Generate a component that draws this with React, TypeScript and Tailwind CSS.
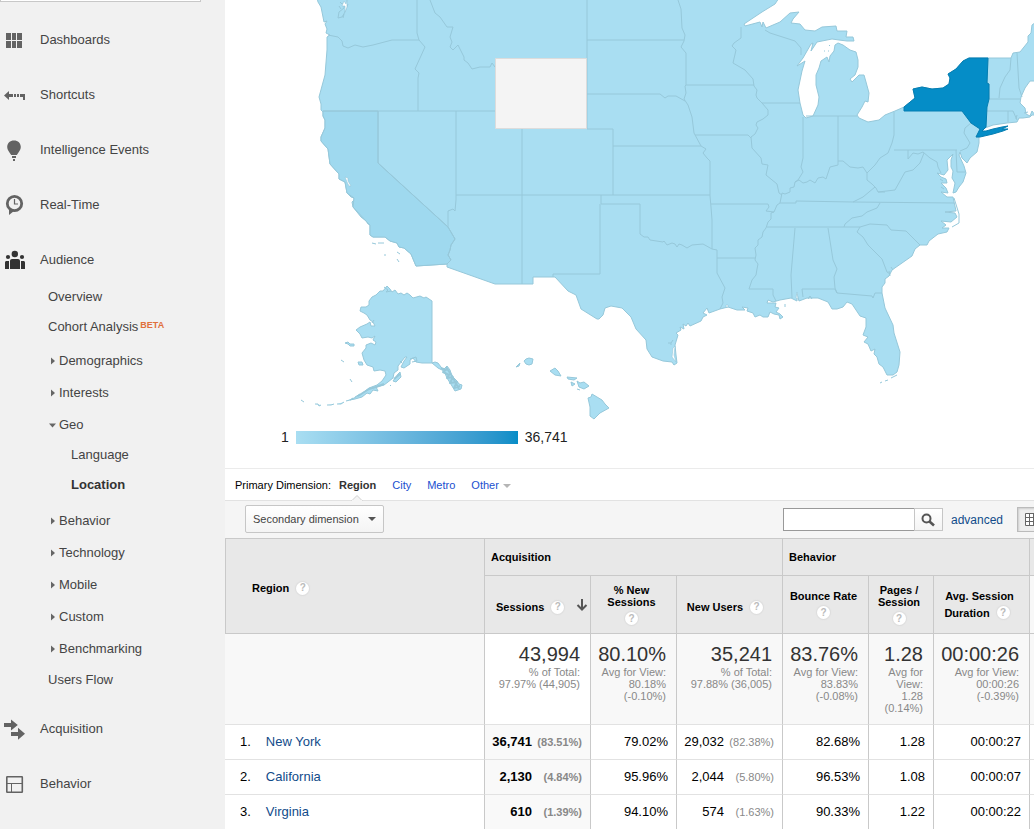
import { useState } from 'react'
import type { ReactNode } from 'react'

type IconName = 'dashboards' | 'shortcuts' | 'bulb' | 'realtime' | 'audience' | 'acquisition' | 'behavior'

const ICONS: Record<IconName, ReactNode> = {
  dashboards: <path d="M6 8h5v7H6zM12 8h4v7h-4zM17 8h5v7h-5zM6 16h5v7H6zM12 16h4v7h-4zM17 16h5v7h-5z" />,
  shortcuts: <path d="M4 15.500L9 11v3h4v3H9v3zM14 14h2v3h-2zM17 14h2v3h-2zM20 14h5v6h-2v-3h-3z" />,
  bulb: <path d="M14 5.500c4 0 6.800 2.700 6.800 6.500 0 3-1.800 4.500-4 8h-5.600c-2.200-3.500-4-5-4-8 0-3.800 2.800-6.500 6.800-6.500zM12 21h4v2h-4zM13 24h2v2h-2z" />,
  realtime: (
    <>
      <circle cx="14.500" cy="13.500" r="7.200" fill="none" stroke="currentColor" strokeWidth="2.800" />
      <path d="M9 18v7l5-4z" />
      <path d="M14.500 9v5H18" fill="none" stroke="currentColor" strokeWidth="1.200" />
    </>
  ),
  audience: (
    <>
      <circle cx="14.800" cy="9" r="3.200" />
      <circle cx="8" cy="12" r="2.100" />
      <circle cx="22" cy="12" r="2.100" />
      <path d="M10 24v-8c0-1.200.8-2 2-2h6c1.200 0 2 .8 2 2v8zM5 24v-6.500c0-.9.600-1.500 1.500-1.500H9v8zM25 24v-6.500c0-.9-.6-1.500-1.500-1.500H21v8z" />
    </>
  ),
  acquisition: <path d="M4 9h7V5.500l6.800 5.500-6.800 5.500V13H4zM11 18h7v-4.200l7 6-7 6V22h-7z" />,
  behavior: (
    <g fill="none" stroke="currentColor">
      <rect x="6.800" y="7.800" width="15.500" height="15.500" rx="0.500" strokeWidth="1.600" />
      <path d="M7 14.500h15M11.500 14.500V23" strokeWidth="1" />
    </g>
  ),
}

const LAND =
  'M317 -2L318 2 321 7 324 22 327 21 325 24 327 29 326 33 330 35 327 37 327 50 325 75 322 86 319 97 321 104 321 110 323 112 323 116 325 120 325 128 321 137 321 141 328 149 330 164 339 174 339 179 345 182 347 193 351 197 354 198 354 200 352 202 353 207 361 217 366 221 368 224 370 225 370 235 373 237 385 237 390 241 397 243 399 247 404 248 411 254 416 266 447 264 447 267 495 284 533 284 533 277 555 277 568 291 576 295 581 309 597 319 599 319 603 315 605 308 611 306 622 308 631 317 636 329 646 340 647 349 652 357 663 361 672 362 674 365 677 363 676 355 675 345 678 335 676 333 681 330 680 327 684 329 683 324 686 326 688 323 690 326 701 321 703 317 707 315 703 313 707 308 709 313 720 309 728 307 737 310 745 310 742 307 748 308 747 311 753 313 755 317 760 315 763 317 768 317 770 312 774 314 779 315 780 319 783 317 780 314 776 312 779 308 775 307 776 303 767 303 768 300 773 302 780 300 791 298 797 301 797 294 799 301 807 298 818 298 828 302 832 309 837 309 843 307 847 302 852 304 860 316 866 318 866 327 863 335 868 337 864 342 868 344 871 351 875 349 874 354 877 357 879 364 883 367 887 375 893 375 897 372 899 365 900 352 894 333 893 325 885 308 882 293 882 287 885 283 885 279 889 276 892 270 902 263 912 256 915 249 920 245 927 245 929 241 938 234 947 232 949 228 942 228 946 225 941 221 951 222 957 217 955 213 945 212 956 211 953 197 947 197 941 192 948 193 946 188 941 183 947 183 946 179 941 177 937 173 944 175 948 170 947 160 953 154 951 160 951 167 953 171 952 178 955 183 953 193 956 192 959 187 963 182 966 173 964 166 959 155 960 152 962 158 967 163 970 158 977 152 979 143 979 137 976 137 980 130 985 128 993 125 1007 123 1017 122 1019 118 1023 118 1030 117 1032 115 1035 115 1032 111 1030 116 1026 114 1025 108 1020 103 1021 97 1025 88 1030 81 1036 81 1036 22 1032 25 1031 33 1028 36 1028 42 1020 52 1013 53 1011 58 969 58 963 61 956 69 948 74 950 78 949 84 943 88 932 89 922 87 913 89 915 98 904 107 895 111 885 115 879 120 868 122 859 118 857 115 862 107 865 101 868 102 869 93 866 82 864 75 859 75 852 82 850 79 855 75 858 67 858 60 856 52 850 50 843 45 838 43 835 45 834 51 830 56 829 62 827 57 821 61 819 68 816 75 816 85 819 97 818 105 813 116 806 118 803 115 800 103 798 90 802 71 805 61 797 66 803 58 811 44 813 43 811 51 817 42 832 39 839 40 847 41 854 41 853 37 846 37 847 31 837 31 836 26 822 27 815 31 805 30 800 24 791 23 793 19 799 12 790 13 780 22 766 28 763 22 762 27 760 22 745 26 744 24 762 12 775 4 779 -2z'

const NEW_YORK =
  'M904 107L915 98 913 89 922 87 932 89 943 88 949 84 950 78 948 74 956 69 963 61 969 58 988 58 987 83 989 84 989 99 987 107 986 127 982 131 986 131 993 129 1002 127 1008 126 1002 129 1008 129 1003 131 993 134 980 137 976 137 980 129 971 123 965 115 962 111 904 111z'

const CALIFORNIA =
  'M323 111L378 111 378 163 448 227 455 239 451 245 450 250 448 255 451 260 447 264 416 266 411 254 404 248 399 247 397 243 390 241 385 237 373 237 370 235 370 225 366 221 353 207 354 198 347 193 345 182 339 179 339 174 330 164 328 149 321 141 321 137 325 128 325 120 323 116z'

const BORDERS = [
  'M328 35L338 37 342 41 343 46 348 48 355 45 363 47 373 45 392 40 419 40',
  'M417 0L417 33 419 40 425 47 415 69 419 73 418 78 418 111',
  'M430 0L435 13 440 17 447 27 453 27 450 37 452 42 450 47 453 50 458 45 464 57 464 60 468 63 472 69 480 67 490 67 492 63 495 67',
  'M323 111H495M378 111V163L448 227 455 239 451 245 450 250 448 255 451 260 447 264',
  'M448 227L448 211 453 209 455 211 456 200 456 111M456 195H710M522 129V284',
  'M587 0V58M587 40H684M587 94H660L665 98 668 96 676 96 685 101',
  'M678 0L681 9 682 28 685 35 684 41 681 47 686 53 686 85 685 86 686 93 684 99 688 105 692 117 694 133 701 146 706 149 703 153 707 158 710 161 710 196 711 207 712 220 712 249',
  'M686 85H754M587 129H613V195M613 146H701M695 135H748L751 138M587 58V129',
  'M741 27L741 38 734 43 732 46 736 50 733 63 745 70 753 79 754 86 757 90 756 95 757 98 762 103 768 110 768 115 763 119 757 122 756 125 758 128 755 134 751 137 752 148 761 158 762 164 768 165 766 175 777 184 779 193 782 195',
  'M765 30L770 33 795 41 801 48 801 55M762 103H800M803 117V158L801 167 803 172 798 180 795 182',
  'M777 205L780 203 782 193 785 194 790 192 790 188 794 187 795 182 799 180 803 183 807 182 810 180 815 183 818 178 823 177 826 179 830 167 838 165 838 161 843 161 850 167 858 168 863 167 867 173 875 165 880 158 888 153 892 143 894 135 894 112',
  'M777 205L774 212 771 213 771 219 768 222 766 228 763 232 762 237 758 240 758 245 755 248 756 255 755 260 758 264 757 269 756 275 752 280 749 289 773 289 773 295 776 301',
  'M838 116V161M806 116H857M867 173L867 180 872 184 876 188 878 192 895 190 905 172 913 170 920 163 924 153',
  'M878 192L885 192M894 150H957M908 150V159L913 153 918 154 923 152 930 158 937 162 938 167 941 173',
  'M956 150L957 172 965 172M971 123L965 128 964 133 970 143 967 148 960 151',
  'M1011 58L1010 70 1005 77 1000 88 999 98M989 99H1020M1017 53L1019 88 1022 97M987 111H1013L1017 120M1008 111V122M988 58L987 83 989 84V99',
  'M780 203H796V201L853 202 954 203M853 202L863 197 875 187 872 184M880 203L877 208 867 212 862 216 852 218 845 224 844 227',
  'M767 227H860L870 224 887 225 891 230 906 231 920 245M860 227L857 232 863 237 868 245 882 259 887 272 890 274',
  'M795 228L791 275 792 298M828 228L833 260 837 269 834 277 835 288 837 293',
  'M803 297L802 289H835L837 293 872 296 873 298 875 293 882 293',
  'M711 204H768L769 207 766 211 774 212M717 258H755',
  'M601 195V204H640V234L644 237 648 237 650 240 663 242 664 241 667 245 672 243 675 244 677 247 679 244 682 245 687 248 692 245 703 244 712 249 717 250 717 273 725 288 722 297 723 303 720 309',
  'M600 204V274H553V277',
]

// Alaska, the Aleutians and Hawaii
const OUTLYING = [
  'M432 301L426 297 424 298 420 296 413 298 410 295 407 293 404 295 401 293 398 294 395 290 392 292 390 289 387 286 383 291 380 291 376 295 372 297 369 301 369 305 366 307 361 307 360 311 364 313 367 315 370 320 373 322 375 326 371 326 370 322 367 324 360 327 356 330 360 334 362 338 368 337 372 338 375 336 373 340 376 342 375 345 371 343 366 345 366 348 362 353 364 360 367 365 373 367 374 371 380 370 385 371 386 375 382 381 377 385 369 388 360 395 350 400 355 399 362 397 367 393 370 394 373 390 378 391 376 387 384 385 388 382 393 378 394 373 398 370 398 366 405 357 407 357 404 361 401 367 404 368 410 364 410 360 413 358 416 362 422 363 432 363z',
  'M432 363L435 362 438 363 441 367 443 370 447 366 450 370 452 376 457 381 459 384 462 385 461 389 455 391 452 386 447 378 444 371 438 368z',
  'M398 374L400 372 401 377 396 382 393 381z',
  'M345 343L348 342 350 344 354 344 354 346 350 346 348 344zM358 362L362 362 363 365 359 365zM341 360L344 362M350 379L352 382',
  'M301 400L304 402M315 404H318L319 406 321 405M327 405L331 405 334 404M337 404L341 404 344 402M346 401L350 400 353 398M355 397L360 394M390 385L391 386',
  'M524 361L526 359 529 358 533 359 532 364 529 365 526 364zM516 367L520 363 519 366z',
  'M550 371L555 368 558 371 561 376 555 375zM567 377L577 378 574 380 568 379zM571 382L575 384 572 386zM577 381L580 383 584 382 589 386 584 389 579 387zM577 389L580 390',
  'M588 398L591 397 592 394 602 400 605 404 609 408 600 413 594 419 590 416 590 407z',
]

const SPECKS = [
  'M372 243L376 244M378 243L384 243M397 252L400 254M397 259L399 262M384 255H386',
  'M954 198L959 214 959 223 952 227M785 304V307M880 383L882 382M885 381L888 380M891 378L897 375',
  'M668 343L671 343 673 340M670 344H672M808 299L810 296 812 299M890 276L889 271M893 270L891 267',
  'M340 2L342 4 344 3 344 8 339 12 338 18 342 17 345 12 348 4M341 9L339 6M343 18L344 14',
  'M384 287L388 290 386 292 391 291M372 323L374 320M410 359L416 357 417 361 412 362M400 361L402 363',
  'M824 51H825M829 46L830 45M828 51H829M941 187L944 189M940 179L943 181M1024 113L1028 112M1016 119L1017 115',
]

function UsMap() {
  return (
    <svg viewBox="225 0 809 424" preserveAspectRatio="xMinYMin slice" className="block h-[424px] w-full" role="img" aria-label="Sessions by region">
      <g stroke="#96c8da" strokeWidth="1" strokeLinejoin="round">
        <path d={LAND} fill="#a9def2" />
        <path d={CALIFORNIA} fill="#9fd9ef" />
        {OUTLYING.map(d => <path key={d} d={d} fill="#a9def2" />)}
        {BORDERS.map(d => <path key={d} d={d} fill="none" />)}
        {SPECKS.map(d => <path key={d} d={d} fill="none" />)}
        <path d="M441 368L446 370 443 372 449 375 447 378 453 377 450 383 457 382 454 388 460 386M446 367L452 376 459 389" fill="none" strokeWidth="2" />
        <path d="M358 396L369 389 376 387 384 384M394 379L400 374" fill="none" strokeWidth="2" />
      </g>
      <g fill="#fff" stroke="#96c8da" strokeWidth="0.600">
        <path d="M342 6L344 1 346 4 347 0 347 7 345 12 345 6zM345 177L348 178 348 181 351 186 349 186 347 182z" />
        <path d="M673 348L675 346 674 355 676 362 672 357z" />
        <path d="M726 305L728 305 728 307 726 307zM796 298L798 299 797 292z" />
      </g>
      <path d="M495.500 58.500H586.500V128.500H495.500z" fill="#f4f4f4" stroke="#dcdcdc" />
      <path d={NEW_YORK} fill="#058dc7" stroke="#047db1" />
    </svg>
  )
}

function NavRow({ icon, label, active }: { icon: IconName; label: string; active?: boolean }) {
  return (
    <a href="#" className="flex h-10 items-center gap-[10px]">
      <svg viewBox="0 0 30 30" className={active ? 'size-[30px] text-[#333]' : 'size-[30px] text-[#636363]'} fill="currentColor" aria-hidden="true">
        {ICONS[icon]}
      </svg>
      {label}
    </a>
  )
}

function Expandable({ label, open }: { label: string; open?: boolean }) {
  return (
    <a href="#" className="flex h-8 items-center gap-[2px]">
      <svg viewBox="0 0 9 9" className="size-[9px]" fill="#666" aria-hidden="true">
        <path d={open ? 'M1 2.500h7L4.500 6.500z' : 'M3 0.500l4 3.500L3 7.500z'} />
      </svg>
      {label}
    </a>
  )
}

function Sidebar() {
  return (
    <aside className="w-[225px] shrink-0 overflow-hidden bg-[#f1f1f1] text-[13px] text-[#444]">
      <input type="search" aria-label="Search reports" className="-mt-[26px] block h-7 w-[201px] border border-[#c8c8c8] bg-white outline-none" />
      <ul className="flex flex-col gap-[15px] pt-[18px]">
        <li><NavRow icon="dashboards" label="Dashboards" /></li>
        <li><NavRow icon="shortcuts" label="Shortcuts" /></li>
        <li><NavRow icon="bulb" label="Intelligence Events" /></li>
        <li><NavRow icon="realtime" label="Real-Time" /></li>
        <li>
          <NavRow icon="audience" label="Audience" active />
          <ul className="-mb-px pt-[2px] pl-12">
            <li><a href="#" className="flex h-[30px] items-center">Overview</a></li>
            <li>
              <a href="#" className="flex h-[30px] items-center gap-[2px]">
                Cohort Analysis
                <span className="pb-[3px] text-[9px] font-bold text-[#e0703c]">BETA</span>
              </a>
            </li>
            <li className="pt-[3px]"><Expandable label="Demographics" /></li>
            <li><Expandable label="Interests" /></li>
            <li>
              <Expandable label="Geo" open />
              <ul className="-mt-px pb-[5px] pl-[23px]">
                <li><a href="#" className="flex h-[30px] items-center">Language</a></li>
                <li><a href="#" className="flex h-[30px] items-center font-bold text-[#333]">Location</a></li>
              </ul>
            </li>
            {['Behavior', 'Technology', 'Mobile', 'Custom', 'Benchmarking'].map(label => (
              <li key={label}><Expandable label={label} /></li>
            ))}
            <li><a href="#" className="flex h-[30px] items-center">Users Flow</a></li>
          </ul>
        </li>
        <li><NavRow icon="acquisition" label="Acquisition" /></li>
        <li><NavRow icon="behavior" label="Behavior" /></li>
      </ul>
    </aside>
  )
}

function Dimensions() {
  return (
    <div className="flex h-8 items-center border-b border-[#e2e2e2] pl-[10px] text-[11px] text-black">
      <span className="pt-[2px]">Primary Dimension:</span>
      <a href="#" className="relative ml-2 flex h-full items-center pt-[2px] font-bold text-[#333]">
        Region
        <svg viewBox="0 0 12 6" className="absolute -bottom-px left-3 h-[6px] w-3" aria-hidden="true">
          <path d="M0.500 6L6 0.500 11.500 6z" fill="#f5f5f5" stroke="#d0d0d0" />
          <path d="M1 6h10" stroke="#f5f5f5" strokeWidth="2" />
        </svg>
      </a>
      <a href="#" className="ml-4 pt-[2px] text-[#1a4fcf]">City</a>
      <a href="#" className="ml-4 pt-[2px] text-[#1a4fcf]">Metro</a>
      <a href="#" className="ml-4 flex items-center gap-1 pt-[2px] text-[#1a4fcf]">
        Other
        <svg viewBox="0 0 8 4" className="h-1 w-2" fill="#b5b5b5" aria-hidden="true"><path d="M0 0h8L4 4z" /></svg>
      </a>
    </div>
  )
}

function Toolbar() {
  const [query, setQuery] = useState('')

  return (
    <div className="flex h-[37px] items-center bg-[#f5f5f5] pl-5">
      <div className="relative pb-px">
        <select aria-label="Secondary dimension" className="block h-7 w-[139px] appearance-none rounded-[2px] border border-[#c6c6c6] bg-linear-to-b from-white to-[#f4f4f4] pl-[7px] text-[11px] text-[#444]">
          <option>Secondary dimension</option>
        </select>
        <svg viewBox="0 0 8 4" className="pointer-events-none absolute top-3 right-2 h-1 w-2" fill="#555" aria-hidden="true"><path d="M0 0h8L4 4z" /></svg>
      </div>
      <form className="ml-auto flex shrink-0 items-center" onSubmit={e => e.preventDefault()}>
        <input
          type="text"
          aria-label="Search table"
          value={query}
          onChange={e => setQuery(e.target.value)}
          className="h-[23px] w-[132px] border border-[#999] bg-white px-1 text-[11px] outline-none"
        />
        <button type="submit" aria-label="Search" className="-ml-px flex h-[23px] w-[29px] items-center justify-center border border-[#c6c6c6] bg-linear-to-b from-white to-[#f4f4f4]">
          <svg viewBox="0 0 14 14" className="size-[14px]" fill="none" stroke="#555" aria-hidden="true">
            <circle cx="5.500" cy="5.500" r="4" strokeWidth="2" />
            <path d="M8.500 8.500L13 12.500" strokeWidth="2.600" />
          </svg>
        </button>
        <a href="#" className="ml-2 text-[12px] text-[#114b8a]">advanced</a>
        <button type="button" aria-label="Table view" className="ml-[14px] flex h-[25px] w-[17px] items-center justify-end border border-r-0 border-[#bbb] bg-[#eee] shadow-[inset_1px_1px_2px_#ccc]">
          <svg viewBox="0 0 9 13" className="h-[13px] w-[9px]" fill="#fff" stroke="#666" aria-hidden="true">
            <path d="M0.500 0.500h13v12h-13zM0.500 4.500h13M0.500 8.500h13M4.500 0.500v12M8.500 0.500v12" />
          </svg>
        </button>
      </form>
    </div>
  )
}

function Help() {
  return (
    <button
      type="button"
      aria-label="Help"
      className="inline-flex size-[13px] shrink-0 items-center justify-center rounded-full bg-white text-[10px] leading-none font-bold text-[#bbb] shadow-[0_0_1px_1px_#dcdcdc]"
    >
      ?
    </button>
  )
}

const SUMMARY = [
  { value: '43,994', note: '% of Total: 97.97% (44,905)' },
  { value: '80.10%', note: 'Avg for View: 80.18% (-0.10%)' },
  { value: '35,241', note: '% of Total: 97.88% (36,005)' },
  { value: '83.76%', note: 'Avg for View: 83.83% (-0.08%)' },
  { value: '1.28', note: 'Avg for View: 1.28 (0.14%)' },
  { value: '00:00:26', note: 'Avg for View: 00:00:26 (-0.39%)' },
]

const ROWS = [
  { region: 'New York', sessions: '36,741', share: '(83.51%)', fresh: '79.02%', users: '29,032', userShare: '(82.38%)', bounce: '82.68%', pages: '1.28', time: '00:00:27' },
  { region: 'California', sessions: '2,130', share: '(4.84%)', fresh: '95.96%', users: '2,044', userShare: '(5.80%)', bounce: '96.53%', pages: '1.08', time: '00:00:07' },
  { region: 'Virginia', sessions: '610', share: '(1.39%)', fresh: '94.10%', users: '574', userShare: '(1.63%)', bounce: '90.33%', pages: '1.22', time: '00:00:22' },
]

const GROUP = 'h-[37px] border-b border-l border-[#c9c9c9] pl-[6px] text-left'
const HEAD = 'h-[58px] border-b border-l border-[#c9c9c9] pr-1 leading-3'
const CELL = 'h-[35px] border-b border-l border-b-[#e2e2e2] border-l-[#c9c9c9] pr-2 text-right'

function RegionTable() {
  return (
    <table className="w-full table-fixed border-separate border-spacing-0 border-t border-[#c9c9c9] text-[13px] text-black">
      <colgroup>
        <col className="w-[259px]" />
        <col className="w-[106px]" />
        <col className="w-[86px]" />
        <col className="w-[106px]" />
        <col className="w-[86px]" />
        <col className="w-[65px]" />
        <col className="w-[96px]" />
        <col />
      </colgroup>
      <thead className="bg-[#e8e8e8] text-[11px]">
        <tr>
          <th rowSpan={2} className="border-b border-l border-[#c9c9c9] pt-1 pl-[26px] text-left">
            <div className="flex items-center gap-[7px]">Region <Help /></div>
          </th>
          <th colSpan={3} className={GROUP}>Acquisition</th>
          <th colSpan={3} className={GROUP}>Behavior</th>
          <th className={GROUP}></th>
        </tr>
        <tr>
          <th className={HEAD}>
            <div className="flex items-center gap-[7px] pt-[5px] pl-[11px]">
              Sessions <Help />
              <svg viewBox="0 0 12 12" className="mb-1 ml-[5px] size-3 shrink-0" fill="none" stroke="#555" strokeWidth="2" aria-label="Sorted descending">
                <path d="M6 0v10M1.500 6L6 10.500 10.500 6" />
              </svg>
            </div>
          </th>
          <th className={HEAD}>
            <div className="flex flex-col items-center gap-1"><span>% New<br />Sessions</span><Help /></div>
          </th>
          <th className={HEAD}>
            <div className="flex items-center justify-center gap-[7px] pt-[5px] pr-[5px]">New Users <Help /></div>
          </th>
          <th className={HEAD}>
            <div className="flex flex-col items-center gap-1">Bounce Rate <Help /></div>
          </th>
          <th className={HEAD}>
            <div className="flex flex-col items-center gap-1"><span>Pages /<br />Session</span><Help /></div>
          </th>
          <th className={HEAD}>
            <div className="flex flex-col items-center gap-1">
              Avg. Session
              <span className="flex items-center gap-[7px] pr-[5px]">Duration <Help /></span>
            </div>
          </th>
          <th className="border-b border-l border-[#c9c9c9] bg-[#f8f8f8]"></th>
        </tr>
      </thead>
      <tbody>
        <tr className="bg-[#f8f8f8]">
          <td className="border-b border-[#e2e2e2]"></td>
          {SUMMARY.map((s, i) => (
            <td
              key={i}
              className={`h-[91px] border-b border-l border-b-[#e2e2e2] border-l-[#c9c9c9] pt-2 pr-[10px] pl-1 text-right align-top ${i === 0 ? 'bg-white' : ''}`}
            >
              <div className="text-[20px] leading-6 text-[#333]">{s.value}</div>
              <div className="text-[11px] leading-3 text-[#888]">{s.note}</div>
            </td>
          ))}
          <td className="border-b border-l border-b-[#e2e2e2] border-l-[#c9c9c9]"></td>
        </tr>
        {ROWS.map((r, i) => (
          <tr key={r.region}>
            <td className="border-b border-[#e2e2e2] pl-[15px]">
              {i + 1}.
              <a href="#" className="ml-[15px] text-[#114b8a]">{r.region}</a>
            </td>
            <td className={`${CELL} bg-[#f9f9f9] font-bold`}>
              {r.sessions}
              <span className="inline-block w-[50px] text-[11px] text-[#888]">{r.share}</span>
            </td>
            <td className={CELL}>{r.fresh}</td>
            <td className={CELL}>
              {r.users}
              <span className="inline-block w-[50px] text-[11px] text-[#888]">{r.userShare}</span>
            </td>
            <td className={CELL}>{r.bounce}</td>
            <td className={CELL}>{r.pages}</td>
            <td className={CELL}>{r.time}</td>
            <td className="border-b border-l border-b-[#e2e2e2] border-l-[#c9c9c9]"></td>
          </tr>
        ))}
      </tbody>
    </table>
  )
}

export default function App() {
  return (
    <div className="flex min-h-screen bg-white font-['Liberation_Sans',Arial,sans-serif]">
      <Sidebar />
      <main className="min-w-0 flex-1 overflow-hidden">
        <section className="border-b border-[#ebebeb]">
          <UsMap />
          <div className="flex h-[44px] items-start gap-[7px] pt-[5px] pl-14 text-[14px] leading-4 text-[#222]">
            <span>1</span>
            <span className="mt-[2px] h-[13px] w-[222px] bg-linear-to-r from-[#a9def2] to-[#058dc7]" />
            <span>36,741</span>
          </div>
        </section>
        <Dimensions />
        <Toolbar />
        <RegionTable />
      </main>
    </div>
  )
}
